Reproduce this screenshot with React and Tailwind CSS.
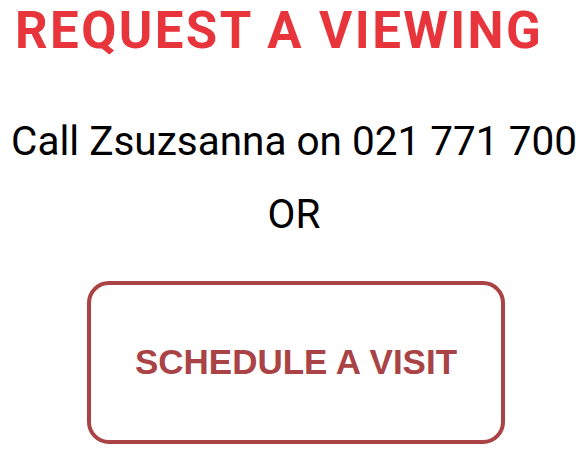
export default function App() {
  return (
    <div className="w-[588px] h-[449px] bg-white overflow-hidden" style={{ fontFamily: 'Roboto, "Liberation Sans", sans-serif' }}>
      <h1 className="pl-[15px] pt-[3px] text-[51px] leading-[56px] font-bold tracking-[2.4px] text-[#e8353b]">REQUEST A VIEWING</h1>
      <p className="mt-[58px] text-center text-[40.5px] leading-[48px] text-black">Call Zsuzsanna on 021 771 700</p>
      <p className="mt-[25px] text-center text-[40.5px] leading-[48px] text-black">OR</p>
      <div className="mt-[43px] flex justify-center">
        <button className="w-[418px] h-[163px] ml-[4px] rounded-[22px] border-4 border-[#a94346] text-[35px] font-bold text-[#a94346] font-['Liberation_Sans',Arial,sans-serif]">
          SCHEDULE A VISIT
        </button>
      </div>
    </div>
  )
}
